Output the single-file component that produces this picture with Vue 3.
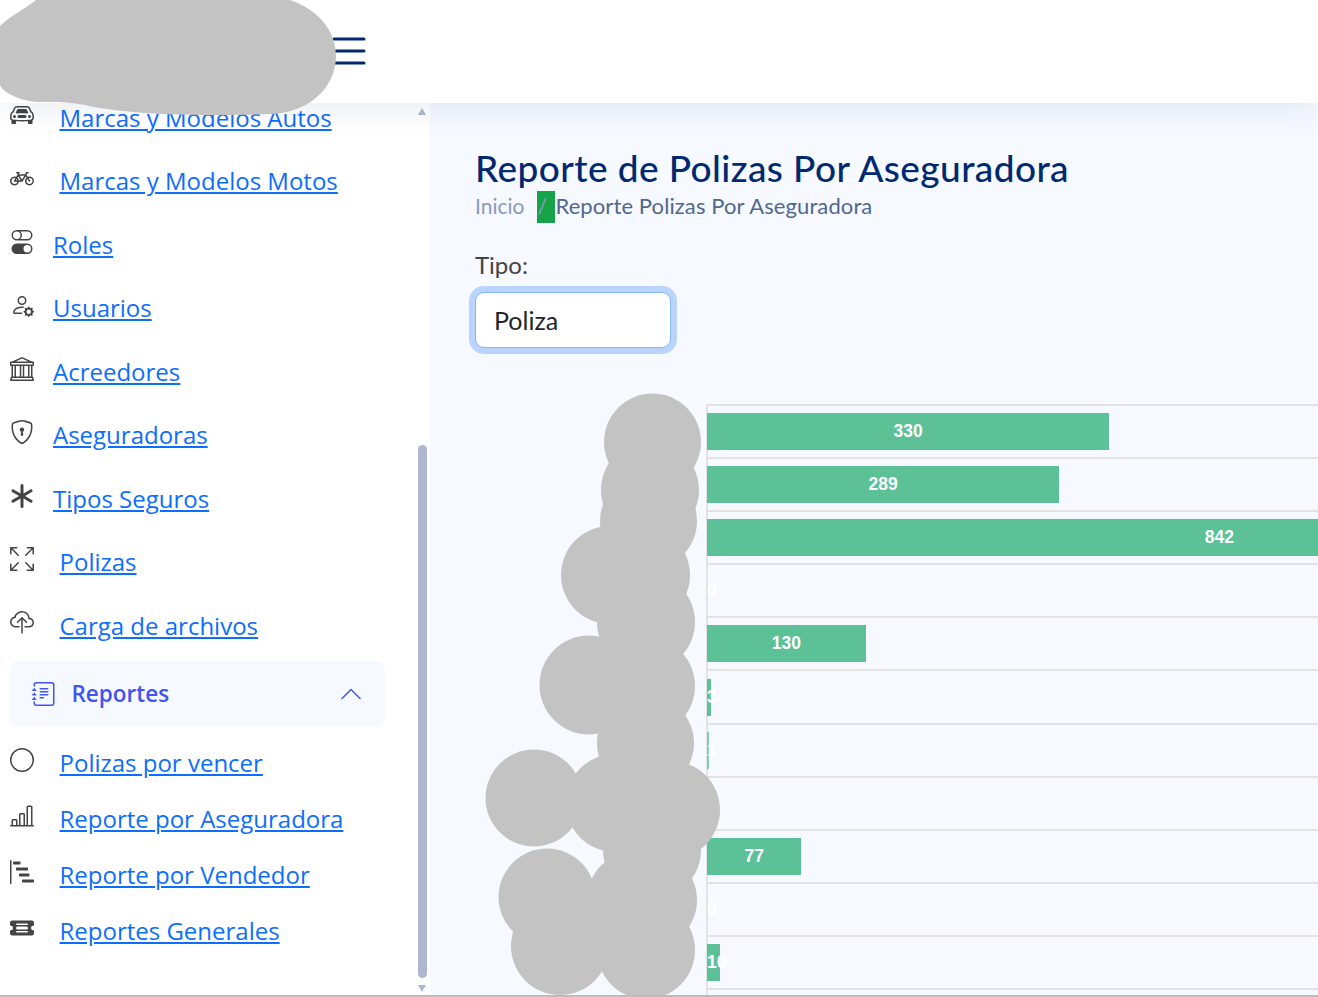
<script setup>
const icons = {
  car: [
    'M4 9a1 1 0 1 1-2 0 1 1 0 0 1 2 0Zm10 0a1 1 0 1 1-2 0 1 1 0 0 1 2 0ZM6 8a1 1 0 0 0 0 2h4a1 1 0 1 0 0-2H6ZM4.862 4.276 3.906 6.19a.51.51 0 0 0 .497.731c.91-.073 2.35-.17 3.597-.17 1.247 0 2.688.097 3.597.17a.51.51 0 0 0 .497-.731l-.956-1.913A.5.5 0 0 0 10.691 4H5.309a.5.5 0 0 0-.447.276Z',
    'M2.52 3.515A2.5 2.5 0 0 1 4.82 2h6.362c1 0 1.904.596 2.298 1.515l.792 1.848c.075.175.21.319.38.404.5.25.855.715.965 1.262l.335 1.679c.033.161.049.325.049.49v.413c0 .814-.39 1.543-1 1.997V13.5a.5.5 0 0 1-.5.5h-2a.5.5 0 0 1-.5-.5v-1.338c-1.292.048-2.745.088-4 .088s-2.708-.04-4-.088V13.5a.5.5 0 0 1-.5.5h-2a.5.5 0 0 1-.5-.5v-1.892c-.61-.454-1-1.183-1-1.997v-.413a2.5 2.5 0 0 1 .049-.49l.335-1.68c.11-.546.465-1.012.964-1.261a.807.807 0 0 0 .381-.404l.792-1.848ZM4.82 3a1.5 1.5 0 0 0-1.379.91l-.792 1.847a1.8 1.8 0 0 1-.853.904.807.807 0 0 0-.43.564L1.03 8.904a1.5 1.5 0 0 0-.03.294v.413c0 .796.62 1.448 1.408 1.484 1.555.07 3.786.155 5.592.155 1.806 0 4.037-.084 5.592-.155A1.479 1.479 0 0 0 15 9.611v-.413c0-.099-.01-.197-.03-.294l-.335-1.68a.807.807 0 0 0-.43-.563 1.807 1.807 0 0 1-.853-.904l-.792-1.848A1.5 1.5 0 0 0 11.18 3H4.82Z',
  ],
  bicycle: [
    'M4 4.5a.5.5 0 0 1 .5-.5H6a.5.5 0 0 1 0 1v.5h4.14l.386-1.158A.5.5 0 0 1 11 4h1a.5.5 0 0 1 0 1h-.64l-.311.935.807 1.29a3 3 0 1 1-.848.53l-.508-.812-2.076 3.322A.5.5 0 0 1 8 10.5H5.959a3 3 0 1 1-1.815-3.274L5 5.856V5h-.5a.5.5 0 0 1-.5-.5zm1.5 2.443-.508.814c.5.444.85 1.054.967 1.743h1.139L5.5 6.943zM8 9.057 9.598 6.5H6.402L8 9.057zM4.937 9.5a1.997 1.997 0 0 0-.487-.877l-.548.877h1.035zM3.603 8.092A2 2 0 1 0 4.937 10.5H3a.5.5 0 0 1-.424-.765l1.027-1.643zm7.947.53a2 2 0 1 0 .848-.53l1.026 1.643a.5.5 0 1 1-.848.53L11.55 8.623z',
  ],
  toggles: [
    'M4.5 9a3.5 3.5 0 1 0 0 7h7a3.5 3.5 0 1 0 0-7h-7zm7 6a2.5 2.5 0 1 1 0-5 2.5 2.5 0 0 1 0 5zm-7-14a2.5 2.5 0 1 0 0 5 2.5 2.5 0 0 0 0-5zm2.45 0A3.49 3.49 0 0 1 8 3.5 3.49 3.49 0 0 1 6.95 6h4.55a2.5 2.5 0 0 0 0-5H6.95zM4.5 0h7a3.5 3.5 0 1 1 0 7h-7a3.5 3.5 0 1 1 0-7z',
  ],
  personGear: [
    'M11 5a3 3 0 1 1-6 0 3 3 0 0 1 6 0ZM8 7a2 2 0 1 0 0-4 2 2 0 0 0 0 4Zm.256 7a4.474 4.474 0 0 1-.229-1.004H3c.001-.246.154-.986.832-1.664C4.484 10.68 5.711 10 8 10c.26 0 .507.009.74.025.226-.341.496-.65.804-.918C9.077 9.038 8.564 9 8 9c-5 0-6 3-6 4s1 1 1 1h5.256Z',
    'M11.886 9.46c.18-.613 1.048-.613 1.229 0l.043.148a.64.64 0 0 0 .921.382l.136-.074c.561-.306 1.175.308.87.869l-.075.136a.64.64 0 0 0 .382.92l.149.045c.612.18.612 1.048 0 1.229l-.15.043a.64.64 0 0 0-.38.921l.074.136c.305.561-.309 1.175-.87.87l-.136-.075a.64.64 0 0 0-.92.382l-.045.149c-.18.612-1.048.612-1.229 0l-.043-.15a.64.64 0 0 0-.921-.38l-.136.074c-.561.305-1.175-.309-.87-.87l.075-.136a.64.64 0 0 0-.382-.92l-.148-.045c-.613-.18-.613-1.048 0-1.229l.148-.043a.64.64 0 0 0 .382-.921l-.074-.136c-.306-.561.308-1.175.869-.87l.136.075a.64.64 0 0 0 .92-.382l.045-.148ZM14 12.5a1.5 1.5 0 1 0-3 0 1.5 1.5 0 0 0 3 0Z',
  ],
  bank: [
    'm8 0 6.61 3h.89a.5.5 0 0 1 .5.5v2a.5.5 0 0 1-.5.5H15v7a.5.5 0 0 1 .485.38l.5 2a.498.498 0 0 1-.485.62H.5a.498.498 0 0 1-.485-.62l.5-2A.501.501 0 0 1 1 13V6H.5a.5.5 0 0 1-.5-.5v-2A.5.5 0 0 1 .5 3h.89L8 0ZM3.777 3h8.447L8 1 3.777 3ZM2 6v7h1V6H2Zm2 0v7h2.5V6H4Zm3.5 0v7h1V6h-1Zm2 0v7H12V6H9.5ZM13 6v7h1V6h-1Zm2-1V4H1v1h14Zm-.39 9H1.39l-.25 1h13.72l-.25-1Z',
  ],
  shield: [
    'M5.338 1.59a61.44 61.44 0 0 0-2.837.856.481.481 0 0 0-.328.39c-.554 4.157.726 7.19 2.253 9.188a10.725 10.725 0 0 0 2.287 2.233c.346.244.652.42.893.533.12.057.218.095.293.118a.55.55 0 0 0 .101.025.615.615 0 0 0 .1-.025c.076-.023.174-.061.294-.118.24-.113.547-.29.893-.533a10.726 10.726 0 0 0 2.287-2.233c1.527-1.997 2.807-5.031 2.253-9.188a.48.48 0 0 0-.328-.39c-.651-.213-1.75-.56-2.837-.855C9.552 1.29 8.531 1.067 8 1.067c-.53 0-1.552.223-2.662.524zM5.072.56C6.157.265 7.31 0 8 0s1.843.265 2.928.56c1.11.3 2.229.655 2.887.87a1.54 1.54 0 0 1 1.044 1.262c.596 4.477-.787 7.795-2.465 9.99a11.775 11.775 0 0 1-2.517 2.453 7.159 7.159 0 0 1-1.048.625c-.28.132-.581.24-.829.24s-.548-.108-.829-.24a7.158 7.158 0 0 1-1.048-.625 11.777 11.777 0 0 1-2.517-2.453C1.928 10.487.545 7.169 1.141 2.692A1.54 1.54 0 0 1 2.185 1.43 62.456 62.456 0 0 1 5.072.56z',
    'M9.5 6.5a1.5 1.5 0 0 1-1 1.415l.385 1.99a.5.5 0 0 1-.491.595h-.788a.5.5 0 0 1-.49-.595l.384-1.99a1.5 1.5 0 1 1 2-1.415z',
  ],
  asterisk: [
    'M8 0a1 1 0 0 1 1 1v5.268l4.562-2.634a1 1 0 1 1 1 1.732L10 8l4.562 2.634a1 1 0 1 1-1 1.732L9 9.732V15a1 1 0 1 1-2 0V9.732l-4.562 2.634a1 1 0 1 1-1-1.732L6 8 1.438 5.366a1 1 0 0 1 1-1.732L7 6.268V1a1 1 0 0 1 1-1z',
  ],
  fullscreen: [
    'M5.828 10.172a.5.5 0 0 0-.707 0l-4.096 4.096V11.5a.5.5 0 0 0-1 0v3.975a.5.5 0 0 0 .5.5H4.5a.5.5 0 0 0 0-1H1.732l4.096-4.096a.5.5 0 0 0 0-.707zm4.344 0a.5.5 0 0 1 .707 0l4.096 4.096V11.5a.5.5 0 1 1 1 0v3.975a.5.5 0 0 1-.5.5H11.5a.5.5 0 0 1 0-1h2.768l-4.096-4.096a.5.5 0 0 1 0-.707zm0-4.344a.5.5 0 0 0 .707 0l4.096-4.096V4.5a.5.5 0 1 0 1 0V.525a.5.5 0 0 0-.5-.5H11.5a.5.5 0 0 0 0 1h2.768l-4.096 4.096a.5.5 0 0 0 0 .707zm-4.344 0a.5.5 0 0 1-.707 0L1.025 1.732V4.5a.5.5 0 0 1-1 0V.525a.5.5 0 0 1 .5-.5H4.5a.5.5 0 0 1 0 1H1.732l4.096 4.096a.5.5 0 0 1 0 .707z',
  ],
  upload: [
    'M4.406 1.342A5.53 5.53 0 0 1 8 0c2.69 0 4.923 2 5.166 4.579C14.758 4.804 16 6.137 16 7.773 16 9.569 14.502 11 12.687 11H10a.5.5 0 0 1 0-1h2.688C13.979 10 15 8.988 15 7.773c0-1.216-1.02-2.228-2.313-2.228h-.5v-.5C12.188 2.825 10.328 1 8 1a4.53 4.53 0 0 0-2.941 1.1c-.757.652-1.153 1.438-1.153 2.055v.448l-.445.049C2.064 4.805 1 5.952 1 7.318 1 8.785 2.23 10 3.781 10H6a.5.5 0 0 1 0 1H3.781C1.708 11 0 9.366 0 7.318c0-1.763 1.266-3.223 2.942-3.593.143-.863.698-1.723 1.464-2.383z',
    'M7.646 4.146a.5.5 0 0 1 .708 0l3 3a.5.5 0 0 1-.708.708L8.5 5.707V14.5a.5.5 0 0 1-1 0V5.707L5.354 7.854a.5.5 0 1 1-.708-.708l3-3z',
  ],
  journal: [
    'M5 10.5a.5.5 0 0 1 .5-.5h2a.5.5 0 0 1 0 1h-2a.5.5 0 0 1-.5-.5zm0-2a.5.5 0 0 1 .5-.5h5a.5.5 0 0 1 0 1h-5a.5.5 0 0 1-.5-.5zm0-2a.5.5 0 0 1 .5-.5h5a.5.5 0 0 1 0 1h-5a.5.5 0 0 1-.5-.5zm0-2a.5.5 0 0 1 .5-.5h5a.5.5 0 0 1 0 1h-5a.5.5 0 0 1-.5-.5z',
    'M3 0h10a2 2 0 0 1 2 2v12a2 2 0 0 1-2 2H3a2 2 0 0 1-2-2v-1h1v1a1 1 0 0 0 1 1h10a1 1 0 0 0 1-1V2a1 1 0 0 0-1-1H3a1 1 0 0 0-1 1v1H1V2a2 2 0 0 1 2-2z',
    'M1 5v-.5a.5.5 0 0 1 1 0V5h.5a.5.5 0 0 1 0 1h-2a.5.5 0 0 1 0-1H1zm0 3v-.5a.5.5 0 0 1 1 0V8h.5a.5.5 0 0 1 0 1h-2a.5.5 0 0 1 0-1H1zm0 3v-.5a.5.5 0 0 1 1 0v.5h.5a.5.5 0 0 1 0 1h-2a.5.5 0 0 1 0-1H1z',
  ],
  chevronUp: [
    'M7.646 4.646a.5.5 0 0 1 .708 0l6 6a.5.5 0 0 1-.708.708L8 5.707l-5.646 5.647a.5.5 0 0 1-.708-.708l6-6z',
  ],
  circle: ['M8 15A7 7 0 1 1 8 1a7 7 0 0 1 0 14zm0 1A8 8 0 1 0 8 0a8 8 0 0 0 0 16z'],
  barChart: [
    'M11 2a1 1 0 0 1 1-1h2a1 1 0 0 1 1 1v12h.5a.5.5 0 0 1 0 1H.5a.5.5 0 0 1 0-1H1v-3a1 1 0 0 1 1-1h2a1 1 0 0 1 1 1v3h1V7a1 1 0 0 1 1-1h2a1 1 0 0 1 1 1v7h1V2zm1 12h2V2h-2v12zm-3 0V7H7v7h2zm-5 0v-3H2v3h2z',
  ],
  steps: [
    'M.5 0a.5.5 0 0 1 .5.5v15a.5.5 0 0 1-1 0V.5A.5.5 0 0 1 .5 0zM2 1.5a.5.5 0 0 1 .5-.5h4a.5.5 0 0 1 .5.5v1a.5.5 0 0 1-.5.5h-4a.5.5 0 0 1-.5-.5v-1zm2 4a.5.5 0 0 1 .5-.5h7a.5.5 0 0 1 .5.5v1a.5.5 0 0 1-.5.5h-7a.5.5 0 0 1-.5-.5v-1zm2 4a.5.5 0 0 1 .5-.5h6a.5.5 0 0 1 .5.5v1a.5.5 0 0 1-.5.5h-6a.5.5 0 0 1-.5-.5v-1zm2 4a.5.5 0 0 1 .5-.5h7a.5.5 0 0 1 .5.5v1a.5.5 0 0 1-.5.5h-7a.5.5 0 0 1-.5-.5v-1z',
  ],
  ticket: [
    'M0 4.5A1.5 1.5 0 0 1 1.5 3h13A1.5 1.5 0 0 1 16 4.5V6a.5.5 0 0 1-.5.5 1.5 1.5 0 0 0 0 3 .5.5 0 0 1 .5.5v1.5a1.5 1.5 0 0 1-1.5 1.5h-13A1.5 1.5 0 0 1 0 11.5V10a.5.5 0 0 1 .5-.5 1.5 1.5 0 1 0 0-3A.5.5 0 0 1 0 6V4.5Zm4 1a.5.5 0 0 0 .5.5h7a.5.5 0 0 0 0-1h-7a.5.5 0 0 0-.5.5Zm0 5a.5.5 0 0 0 .5.5h7a.5.5 0 0 0 0-1h-7a.5.5 0 0 0-.5.5ZM4 8a1 1 0 0 0 1 1h6a1 1 0 1 0 0-2H5a1 1 0 0 0-1 1Z',
  ],
};

const menu = [
  { label: 'Marcas y Modelos Autos', icon: 'car', wide: true },
  { label: 'Marcas y Modelos Motos', icon: 'bicycle', wide: true },
  { label: 'Roles', icon: 'toggles' },
  { label: 'Usuarios', icon: 'personGear' },
  { label: 'Acreedores', icon: 'bank' },
  { label: 'Aseguradoras', icon: 'shield' },
  { label: 'Tipos Seguros', icon: 'asterisk' },
  { label: 'Polizas', icon: 'fullscreen', wide: true },
  { label: 'Carga de archivos', icon: 'upload', wide: true },
];

const reportes = [
  { label: 'Polizas por vencer', icon: 'circle' },
  { label: 'Reporte por Aseguradora', icon: 'barChart' },
  { label: 'Reporte por Vendedor', icon: 'steps' },
  { label: 'Reportes Generales', icon: 'ticket' },
];

const values = [330, 289, 842, 0, 130, 3, 1, 0, 77, 0, 10, 0];
const pxPerUnit = 1.216;

function barWidth(value) {
  return value ? value * pxPerUnit + 0.8 + 'px' : '0';
}

const blobs = [
  [652.5, 442, 48.5], [650, 490, 49], [648.5, 521, 48.5], [610, 575, 49], [641, 575, 49],
  [646, 622, 49], [589, 685, 49.5], [646, 686, 49], [645.5, 743, 48.5], [534, 798, 48.5],
  [615, 803, 49], [671, 810, 49], [652, 850, 49], [547, 897, 48.5], [636, 900, 49],
  [648, 900, 49], [560, 946, 49], [646, 950, 49],
];
</script>

<template>
  <div class="page">
    <header class="topbar">
      <svg class="burger" viewBox="0 0 16 16" fill="currentColor">
        <path d="M2.5 12a.5.5 0 0 1 .5-.5h10a.5.5 0 0 1 0 1H3a.5.5 0 0 1-.5-.5zm0-4a.5.5 0 0 1 .5-.5h10a.5.5 0 0 1 0 1H3a.5.5 0 0 1-.5-.5zm0-4a.5.5 0 0 1 .5-.5h10a.5.5 0 0 1 0 1H3a.5.5 0 0 1-.5-.5z" />
      </svg>
    </header>

    <div class="body">
      <aside class="sidebar">
        <nav class="menu">
          <div
            v-for="item in menu"
            :key="item.label"
            class="menu__row"
            :class="{ 'menu__row--wide': item.wide }"
          >
            <svg class="icon" viewBox="0 0 16 16" fill="currentColor">
              <path v-for="d in icons[item.icon]" :key="d" :d="d" />
            </svg>
            <a class="menu__link" href="#">{{ item.label }}</a>
          </div>

          <div class="group">
            <svg class="group__icon" viewBox="0 0 16 16" fill="currentColor">
              <path v-for="d in icons.journal" :key="d" :d="d" />
            </svg>
            <span class="group__label">Reportes</span>
            <svg class="group__chevron" viewBox="0 0 16 16" fill="currentColor">
              <path v-for="d in icons.chevronUp" :key="d" :d="d" />
            </svg>
          </div>

          <div class="submenu">
            <div
              v-for="item in reportes"
              :key="item.label"
              class="menu__row menu__row--sub menu__row--wide"
            >
              <svg class="icon" viewBox="0 0 16 16" fill="currentColor">
                <path v-for="d in icons[item.icon]" :key="d" :d="d" />
              </svg>
              <a class="menu__link" href="#">{{ item.label }}</a>
            </div>
          </div>
        </nav>

        <div class="scrollbar">
          <span class="scrollbar__arrow scrollbar__arrow--up"></span>
          <span class="scrollbar__thumb"></span>
          <span class="scrollbar__arrow scrollbar__arrow--down"></span>
        </div>
      </aside>

      <main class="main">
        <h1 class="title">Reporte de Polizas Por Aseguradora</h1>
        <div class="crumbs">
          <span class="crumbs__home">Inicio</span>
          <span class="crumbs__sep">/</span>
          <span class="crumbs__current">Reporte Polizas Por Aseguradora</span>
        </div>

        <label class="field__label" for="tipo">Tipo:</label>
        <select id="tipo" class="field__select">
          <option>Poliza</option>
        </select>

        <div class="chart">
          <div v-for="(value, i) in values" :key="i" class="chart__row">
            <div
              class="chart__bar"
              :class="{ 'chart__bar--thin': value === 1 }"
              :style="{ width: barWidth(value) }"
            >
              <span v-if="i < 11" class="chart__value">{{ value }}</span>
            </div>
          </div>
        </div>
      </main>
    </div>

    <svg class="mask" width="1318" height="995" viewBox="0 0 1318 995" fill="#c3c3c3">
      <path d="M0 26C10 16 25 9 36 0L290 0C317 9 336 30 336 56C336 86 311 112 272 114C220 116 130 116 85 105C65 101 50 102 36 102C16 100 0 90 0 84Z" />
      <circle v-for="(b, i) in blobs" :key="i" :cx="b[0]" :cy="b[1]" :r="b[2]" />
    </svg>
  </div>
</template>

<style>
html,
body {
  margin: 0;
  background: #fff;
}
</style>

<style scoped>
.page {
  position: relative;
  display: flex;
  flex-direction: column;
  height: 995px;
  overflow: hidden;
  border-bottom: 2px solid #bdbdbd;
  font-family: "Open Sans", "Liberation Sans", sans-serif;
}

.topbar {
  position: relative;
  z-index: 2;
  display: flex;
  flex: 0 0 103px;
  box-sizing: border-box;
  padding: 27px 0 0 325px;
  background: #fff;
  box-shadow: 0 3px 32px rgba(1, 41, 112, 0.1);
}

.burger {
  width: 48px;
  height: 48px;
  color: #012970;
}

.body {
  display: flex;
  flex: 1;
  min-height: 0;
}

.sidebar {
  position: relative;
  flex: 0 0 430px;
  overflow: hidden;
  background: #fff;
}

.menu {
  margin-top: -17px;
  padding-left: 10px;
}

.menu__row {
  display: flex;
  align-items: center;
  gap: 19px;
  height: 63.5px;
}

.menu__row--wide {
  gap: 25.5px;
}

.menu__row--sub {
  height: 56px;
}

.icon {
  flex: none;
  width: 24px;
  height: 24px;
  margin-bottom: 6px;
  color: #444;
}

.menu__link {
  color: #0d6efd;
  font-size: 24px;
  line-height: 36px;
  text-decoration: underline;
}

.group {
  display: flex;
  align-items: center;
  width: 375px;
  height: 66px;
  margin-top: 3px;
  padding: 0 22px;
  box-sizing: border-box;
  border-radius: 8px;
  background: #f6f9ff;
  color: #4154f1;
}

.group__icon {
  width: 24px;
  height: 24px;
}

.group__label {
  margin-left: 15.5px;
  font-size: 22.5px;
  font-weight: 600;
}

.group__chevron {
  width: 24px;
  height: 24px;
  margin-left: auto;
}

.submenu {
  margin-top: 8px;
}

.scrollbar {
  position: absolute;
  top: 0;
  right: 3px;
  bottom: 0;
  width: 9px;
}

.scrollbar__thumb {
  position: absolute;
  top: 342px;
  bottom: 17px;
  left: 0;
  width: 9px;
  border-radius: 5px;
  background: #adb7cf;
}

.scrollbar__arrow {
  position: absolute;
  left: 0;
  width: 0;
  height: 0;
  border-right: 4.5px solid transparent;
  border-left: 4.5px solid transparent;
}

.scrollbar__arrow--up {
  top: 5px;
  border-bottom: 7px solid #adb7cf;
}

.scrollbar__arrow--down {
  bottom: 3px;
  border-top: 7px solid #adb7cf;
}

.main {
  flex: 1;
  min-width: 0;
  padding-left: 45px;
  overflow: hidden;
  background: #f6f9ff;
  font-family: Lato, "Open Sans", sans-serif;
}

.title {
  margin: 42px 0 0;
  color: #012970;
  font-size: 37px;
  font-weight: 500;
  letter-spacing: 0.42px;
  line-height: 46px;
  white-space: nowrap;
}

.crumbs {
  display: flex;
  align-items: center;
  height: 32px;
}

.crumbs__home {
  margin-bottom: 4px;
  color: #899bbd;
  font-size: 21px;
}

.crumbs__sep {
  width: 18px;
  height: 32px;
  margin-left: 13px;
  background: #16a34a;
  color: #899bbd;
  font-size: 21px;
  line-height: 30px;
}

.crumbs__current {
  margin-bottom: 4px;
  color: #51678f;
  font-size: 22px;
  letter-spacing: 0.1px;
}

.field__label {
  display: block;
  margin-top: 24px;
  color: #444;
  font-size: 24px;
  line-height: 36px;
}

.field__select {
  display: block;
  width: 196px;
  height: 56px;
  margin-top: 9px;
  padding: 0 18px;
  box-sizing: border-box;
  border: 1px solid #86b7fe;
  border-radius: 9px;
  outline: none;
  box-shadow: 0 0 0 6px #b9d4fd;
  appearance: none;
  background: #fff;
  color: #212529;
  font-family: inherit;
  font-size: 25px;
}

.chart {
  width: 900px;
  margin-top: 56px;
  margin-left: 231px;
  border-top: 2px solid #e3e3e3;
  border-left: 2px solid #e3e3e3;
}

.chart__row {
  display: flex;
  align-items: center;
  box-sizing: border-box;
  height: 53.1px;
  border-bottom: 2px solid #e3e3e3;
}

.chart__bar {
  display: flex;
  flex: none;
  justify-content: safe center;
  align-items: center;
  height: 37px;
  margin-left: -1px;
  background: #5cc196;
}

.chart__bar--thin {
  background: #7fcfae;
}

.chart__value {
  color: #fff;
  font-family: "Liberation Sans", Arial, sans-serif;
  font-size: 17.5px;
  font-weight: 700;
}

.mask {
  position: absolute;
  top: 0;
  left: 0;
  z-index: 3;
}
</style>
